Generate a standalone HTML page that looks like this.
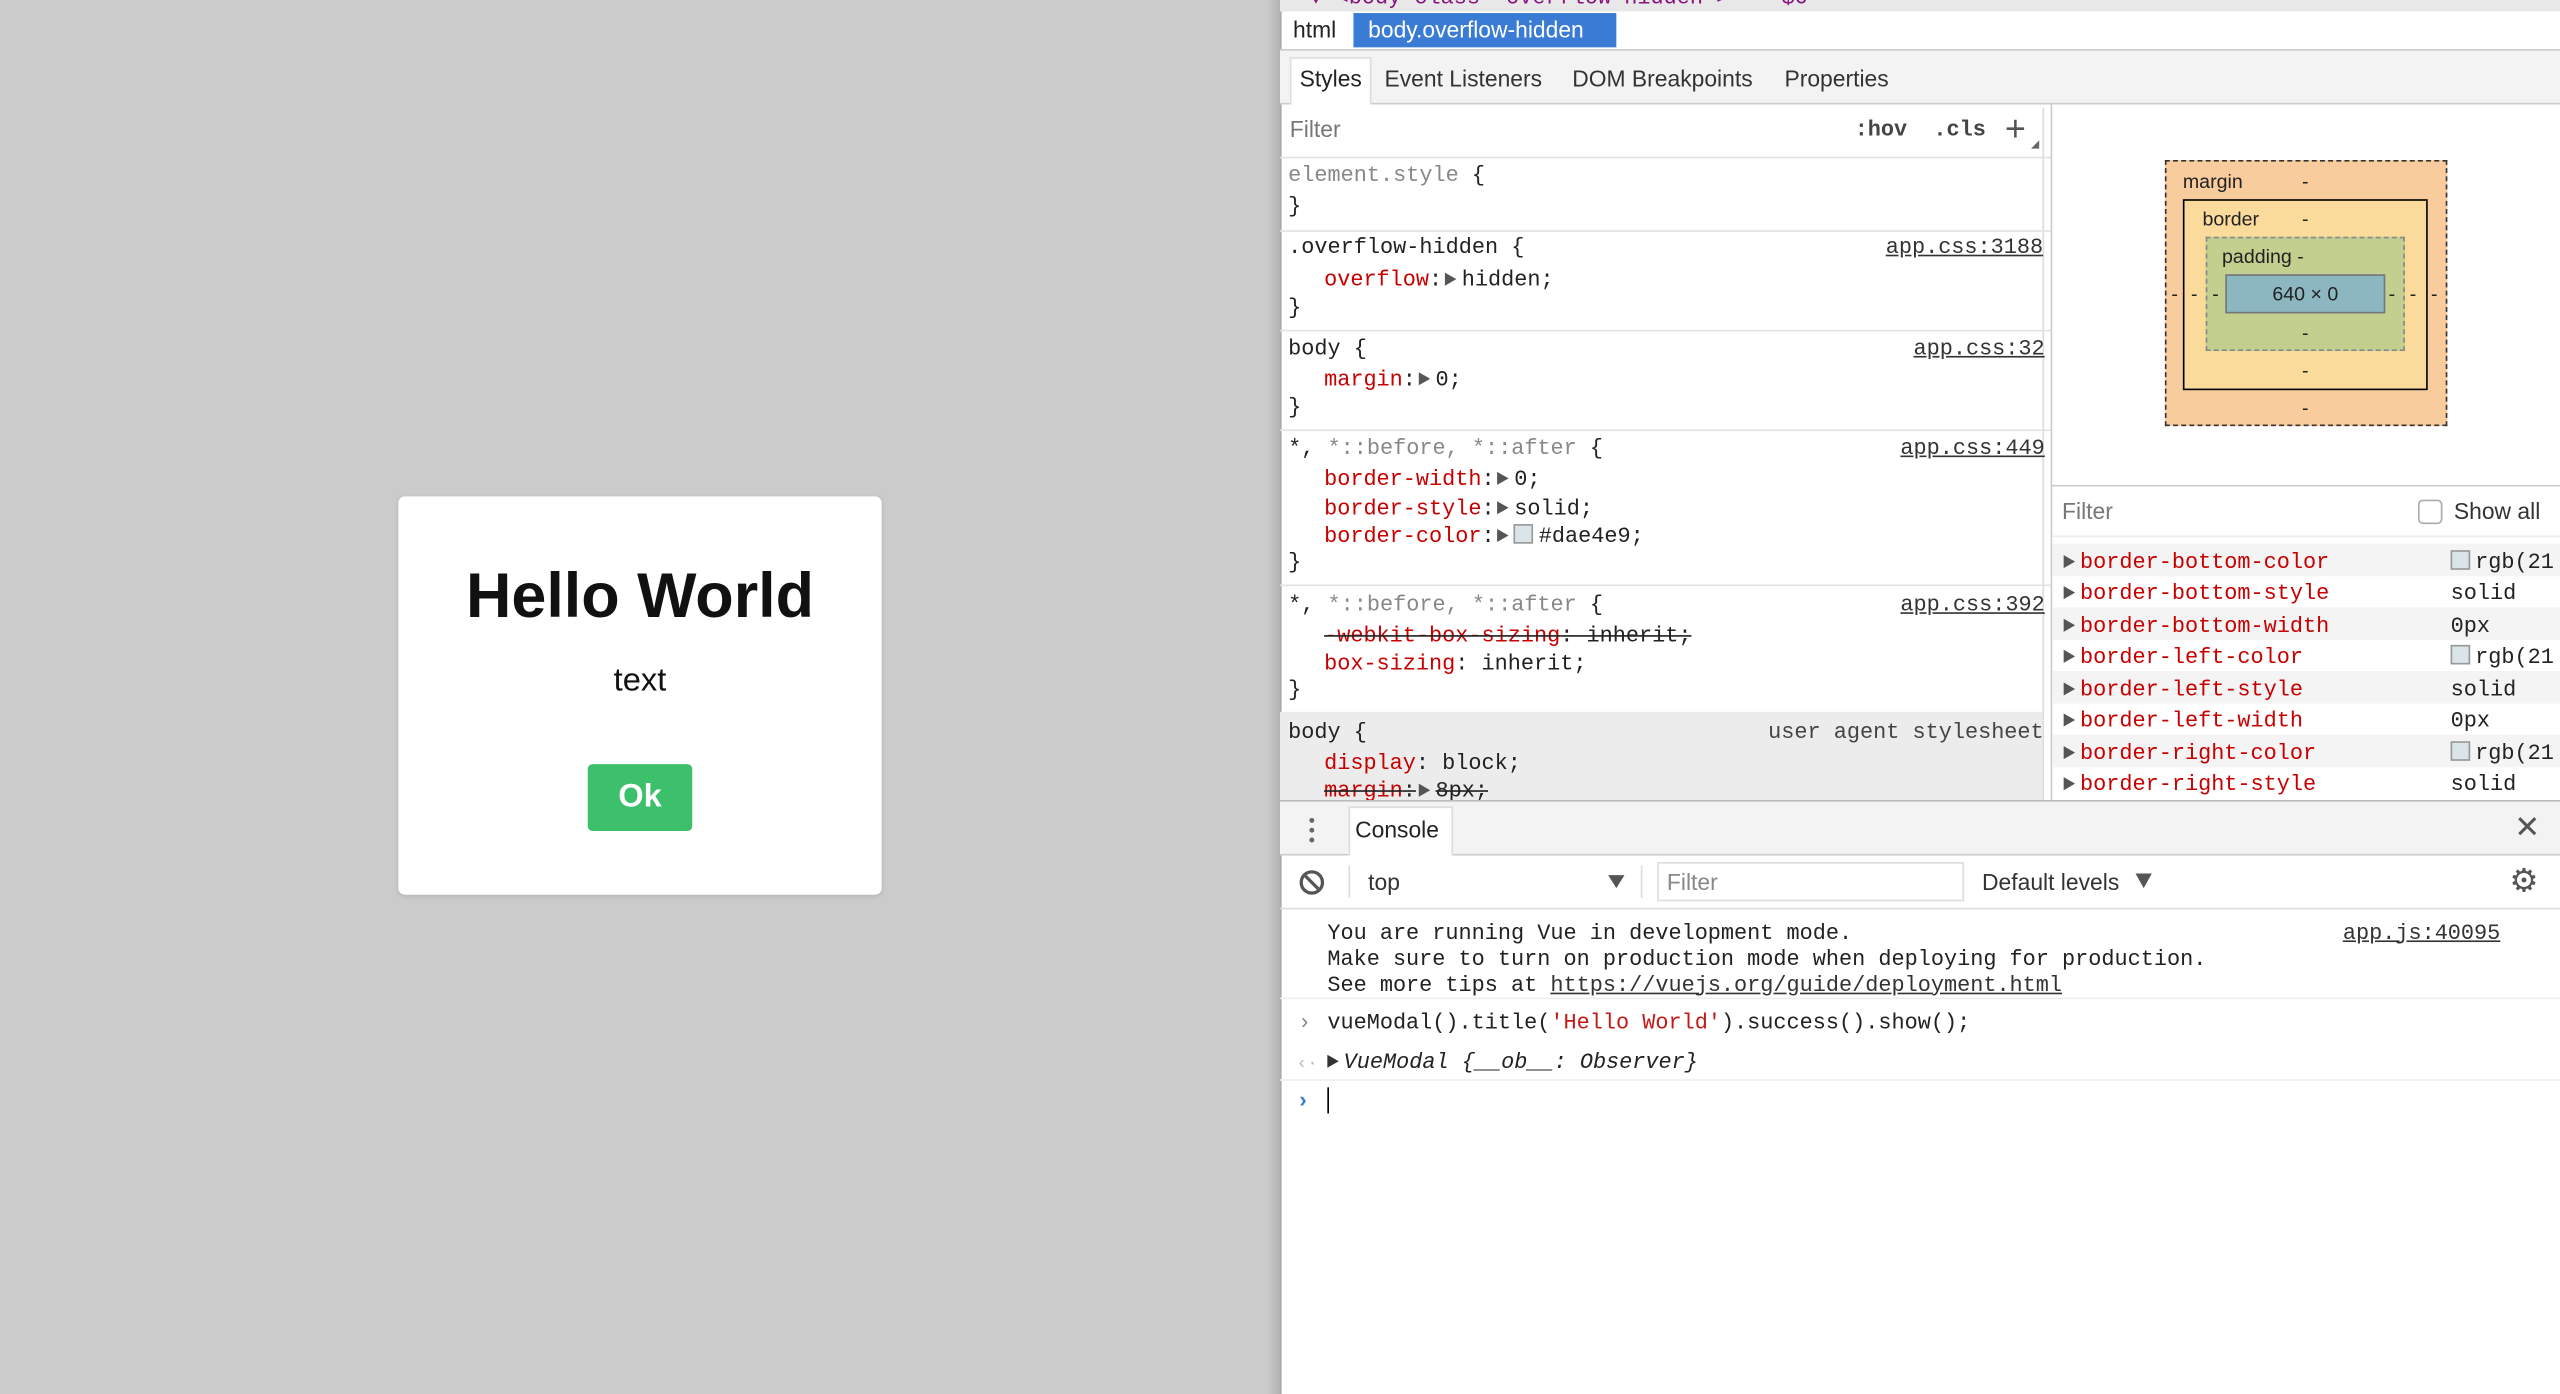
<!DOCTYPE html>
<html><head><meta charset="utf-8"><style>
html,body{margin:0;padding:0;width:2560px;height:1394px;overflow:hidden;background:#cbcbcb}
#w{position:absolute;left:0;top:0;width:1568px;height:854px;transform:scale(1.63265);transform-origin:0 0;font-family:"Liberation Sans",sans-serif;font-size:14px;color:#222}
.a{position:absolute;white-space:pre}
.m{font-family:"Liberation Mono",monospace;font-size:13.4px;line-height:18px;margin-top:2.5px}
.r{color:#c80000}
.g{color:#888}
.u{text-decoration:underline;color:#333}
.s{text-decoration:line-through}
.tri{display:inline-block;width:0;height:0;border-left:7px solid #555;border-top:4.5px solid transparent;border-bottom:4.5px solid transparent;margin:0 3px 0 2px;vertical-align:0}
.sep{position:absolute;left:784px;width:472px;height:1px;background:#e2e2e2}
.sw{display:inline-block;width:10px;height:10px;border:1px solid #999;background:#dae4e9;vertical-align:-1px;margin-right:3px}
</style></head><body><div id="w">
<!-- modal -->
<div class="a" style="left:244px;top:304px;width:296px;height:244px;background:#fff;border-radius:4px;box-shadow:0 1px 3px rgba(0,0,0,.1)"></div>
<div class="a" style="left:244px;width:296px;top:341px;text-align:center;font-size:38.5px;font-weight:bold;color:#111;line-height:50px">Hello World</div>
<div class="a" style="left:244px;width:296px;top:404px;text-align:center;font-size:20px;color:#111;line-height:26px">text</div>
<div class="a" style="left:360px;top:468px;width:64px;height:41px;background:#3cc06b;border-radius:3px;color:#fff;font-size:20px;font-weight:bold;text-align:center;line-height:41px">Ok</div>
<!-- devtools -->
<div class="a" style="left:776px;top:0;width:8px;height:854px;background:linear-gradient(to right,rgba(0,0,0,0),rgba(0,0,0,.12))"></div>
<div class="a" style="left:784px;top:0;width:784px;height:854px;background:#fff;border-left:1px solid #aaa"></div>
<div class="a" style="left:784px;top:0;width:784px;height:7px;background:#e8e8e8;overflow:hidden"><div class="m" style="position:absolute;left:18px;top:-12px;color:#881280">▼ &lt;body class="overflow-hidden"&gt; == $0</div></div>
<div class="a" style="left:792px;top:8px;line-height:21px;font-size:14px">html</div>
<div class="a" style="left:829px;top:8px;width:161px;height:21px;background:#3a7bd5;color:#fff;line-height:21px;font-size:14px;padding-left:9px;box-sizing:border-box">body.overflow-hidden</div>
<div class="a" style="left:784px;top:30px;width:784px;height:34px;background:#f3f3f3;border-top:1px solid #ccc;border-bottom:1px solid #ccc;box-sizing:border-box"></div>
<div class="a" style="left:790px;top:35px;width:50px;height:29px;background:#fff;border:1px solid #ddd;border-bottom:none;box-sizing:border-box"></div>
<div class="a" style="left:796px;top:38px;line-height:20px">Styles</div>
<div class="a" style="left:848px;top:38px;line-height:20px;color:#333">Event Listeners</div>
<div class="a" style="left:963px;top:38px;line-height:20px;color:#333">DOM Breakpoints</div>
<div class="a" style="left:1093px;top:38px;line-height:20px;color:#333">Properties</div>
<!-- styles filter -->
<div class="a" style="left:790px;top:70px;line-height:18px;color:#777">Filter</div>
<div class="a m" style="left:1136px;top:69px;font-weight:bold;color:#444">:hov  .cls</div>
<div class="a" style="left:1228px;top:67px;font-size:22px;line-height:24px;color:#555">+</div>
<div class="a" style="left:1244px;top:86px;width:0;height:0;border-left:5px solid transparent;border-bottom:5px solid #666"></div>
<div class="sep" style="top:96px"></div>
<div class="a" style="left:1256px;top:64px;width:1px;height:427px;background:#ccc"></div>
<div class="a" style="left:1251px;top:66px;width:1px;height:424px;background:#ddd"></div>
<!-- rules -->
<div class="a m g" style="left:789px;top:97px">element.style <span style="color:#222">{</span></div>
<div class="a m" style="left:789px;top:116px">}</div>
<div class="sep" style="top:141px"></div>
<div class="a m" style="left:789px;top:141px">.overflow-hidden {</div>
<div class="a m u" style="left:1155px;top:141px">app.css:3188</div>
<div class="a m" style="left:811px;top:161px"><span class="r">overflow</span>:<span class="tri"></span>hidden;</div>
<div class="a m" style="left:789px;top:178px">}</div>
<div class="sep" style="top:202px"></div>
<div class="a m" style="left:789px;top:203px">body {</div>
<div class="a m u" style="left:1172px;top:203px">app.css:32</div>
<div class="a m" style="left:811px;top:222px"><span class="r">margin</span>:<span class="tri"></span>0;</div>
<div class="a m" style="left:789px;top:239px">}</div>
<div class="sep" style="top:263px"></div>
<div class="a m" style="left:789px;top:264px">*, <span class="g">*::before, *::after</span> {</div>
<div class="a m u" style="left:1164px;top:264px">app.css:449</div>
<div class="a m" style="left:811px;top:283px"><span class="r">border-width</span>:<span class="tri"></span>0;</div>
<div class="a m" style="left:811px;top:301px"><span class="r">border-style</span>:<span class="tri"></span>solid;</div>
<div class="a m" style="left:811px;top:318px"><span class="r">border-color</span>:<span class="tri"></span><span class="sw"></span>#dae4e9;</div>
<div class="a m" style="left:789px;top:334px">}</div>
<div class="sep" style="top:358px"></div>
<div class="a m" style="left:789px;top:360px">*, <span class="g">*::before, *::after</span> {</div>
<div class="a m u" style="left:1164px;top:360px">app.css:392</div>
<div class="a m s" style="left:811px;top:379px"><span class="r">-webkit-box-sizing</span>: inherit;</div>
<div class="a m" style="left:811px;top:396px"><span class="r">box-sizing</span>: inherit;</div>
<div class="a m" style="left:789px;top:412px">}</div>
<div class="a" style="left:784px;top:436px;width:467px;height:54px;background:#ececec"></div>
<div class="a m" style="left:789px;top:438px">body {</div>
<div class="a m" style="left:1083px;top:438px;color:#444">user agent stylesheet</div>
<div class="a m" style="left:811px;top:457px"><span class="r">display</span>: block;</div>
<div class="a m s" style="left:811px;top:474px"><span class="r">margin</span>:<span class="tri"></span>8px;</div>
<!-- box model -->
<div class="a" style="left:1326px;top:98px;width:173px;height:163px;background:#f8cc9d;border:1px dashed #333;box-sizing:border-box"></div>
<div class="a" style="left:1337px;top:122px;width:150px;height:117px;background:#fbdb9b;border:1px solid #000;box-sizing:border-box"></div>
<div class="a" style="left:1351px;top:145px;width:122px;height:70px;background:#c3cf8e;border:1px dashed #888;box-sizing:border-box"></div>
<div class="a" style="left:1363px;top:168px;width:98px;height:24px;background:#8cb6c0;border:1px solid #777;box-sizing:border-box;text-align:center;line-height:22px;font-size:12px;color:#222">640 × 0</div>
<div class="a" style="left:1337px;top:103px;font-size:12px;line-height:16px;color:#222">margin</div>
<div class="a" style="left:1349px;top:126px;font-size:12px;line-height:16px;color:#222">border</div>
<div class="a" style="left:1361px;top:149px;font-size:12px;line-height:16px;color:#222">padding -</div>
<div class="a" style="left:1410px;top:103px;font-size:12px;line-height:16px">-</div>
<div class="a" style="left:1410px;top:126px;font-size:12px;line-height:16px">-</div>
<div class="a" style="left:1410px;top:196px;font-size:12px;line-height:16px">-</div>
<div class="a" style="left:1410px;top:219px;font-size:12px;line-height:16px">-</div>
<div class="a" style="left:1410px;top:242px;font-size:12px;line-height:16px">-</div>
<div class="a" style="left:1330px;top:172px;font-size:12px;line-height:16px">-</div>
<div class="a" style="left:1342px;top:172px;font-size:12px;line-height:16px">-</div>
<div class="a" style="left:1355px;top:172px;font-size:12px;line-height:16px">-</div>
<div class="a" style="left:1463px;top:172px;font-size:12px;line-height:16px">-</div>
<div class="a" style="left:1476px;top:172px;font-size:12px;line-height:16px">-</div>
<div class="a" style="left:1489px;top:172px;font-size:12px;line-height:16px">-</div>
<div class="a" style="left:1257px;top:297px;width:311px;height:1px;background:#ccc"></div>
<div class="a" style="left:1263px;top:304px;line-height:18px;color:#777">Filter</div>
<div class="a" style="left:1481px;top:306px;width:13px;height:13px;border:1px solid #aaa;border-radius:3px;background:#fff"></div>
<div class="a" style="left:1503px;top:304px;line-height:18px;color:#333">Show all</div>
<div class="a" style="left:1257px;top:328px;width:311px;height:1px;background:#eee"></div>
<div class="a" style="left:1257px;top:333px;width:311px;height:19.5px;background:#f4f4f4"></div>
<div class="a" style="left:1257px;top:372px;width:311px;height:19.5px;background:#f4f4f4"></div>
<div class="a" style="left:1257px;top:411px;width:311px;height:19.5px;background:#f4f4f4"></div>
<div class="a" style="left:1257px;top:450px;width:311px;height:19.5px;background:#f4f4f4"></div>
<div class="a m" style="left:1262px;top:333px;line-height:19.5px"><span class="tri"></span><span class="r">border-bottom-color</span>
<span class="tri"></span><span class="r">border-bottom-style</span>
<span class="tri"></span><span class="r">border-bottom-width</span>
<span class="tri"></span><span class="r">border-left-color</span>
<span class="tri"></span><span class="r">border-left-style</span>
<span class="tri"></span><span class="r">border-left-width</span>
<span class="tri"></span><span class="r">border-right-color</span>
<span class="tri"></span><span class="r">border-right-style</span></div>
<div class="a m" style="left:1501px;top:333px;line-height:19.5px"><span class="sw"></span>rgb(21
solid
0px
<span class="sw"></span>rgb(21
solid
0px
<span class="sw"></span>rgb(21
solid</div>
<!-- console drawer -->
<div class="a" style="left:784px;top:490px;width:784px;height:34px;background:#f3f3f3;border-top:1px solid #bbb;border-bottom:1px solid #ccc;box-sizing:border-box"></div>
<div class="a" style="left:802px;top:501px;width:3px;height:3px;border-radius:2px;background:#666;box-shadow:0 6px 0 #666,0 12px 0 #666"></div>
<div class="a" style="left:826px;top:494px;width:64px;height:30px;background:#fff;border:1px solid #ddd;border-bottom:none;box-sizing:border-box"></div>
<div class="a" style="left:830px;top:498px;line-height:20px;color:#222">Console</div>
<div class="a" style="left:1540px;top:496px;font-size:19px;line-height:24px;color:#555">✕</div>
<div class="a" style="left:796px;top:533px;width:15px;height:15px;border:2px solid #555;border-radius:50%;box-sizing:border-box;overflow:hidden"><div style="position:absolute;left:4.5px;top:-2px;width:2px;height:16px;background:#555;transform:rotate(-45deg)"></div></div>
<div class="a" style="left:826px;top:530px;width:1px;height:20px;background:#ddd"></div>
<div class="a" style="left:838px;top:531px;line-height:18px;color:#333">top</div>
<div class="a" style="left:985px;top:536px;width:0;height:0;border-top:8px solid #555;border-left:5px solid transparent;border-right:5px solid transparent"></div>
<div class="a" style="left:1005px;top:530px;width:1px;height:20px;background:#ddd"></div>
<div class="a" style="left:1015px;top:528px;width:188px;height:24px;border:1px solid #ddd;box-sizing:border-box"></div>
<div class="a" style="left:1021px;top:531px;line-height:18px;color:#888">Filter</div>
<div class="a" style="left:1214px;top:531px;line-height:18px;color:#333">Default levels</div>
<div class="a" style="left:1308px;top:535px;width:0;height:0;border-top:9px solid #555;border-left:5px solid transparent;border-right:5px solid transparent"></div>
<div class="a" style="left:1537px;top:528px;font-size:20px;line-height:24px;color:#555">⚙</div>
<div class="a" style="left:784px;top:556px;width:784px;height:1px;background:#ddd"></div>
<div class="a m" style="left:813px;top:562px;line-height:16px;color:#222">You are running Vue in development mode.
Make sure to turn on production mode when deploying for production.
See more tips at <span class="u">https://vuejs.org/guide/deployment.html</span></div>
<div class="a m u" style="left:1435px;top:562px;line-height:16px">app.js:40095</div>
<div class="a" style="left:784px;top:611px;width:784px;height:1px;background:#eee"></div>
<div class="a m" style="left:795px;top:616px;color:#888">›</div>
<div class="a m" style="left:813px;top:616px">vueModal().title(<span style="color:#c41a16">'Hello World'</span>).success().show();</div>
<div class="a m" style="left:794px;top:640px;color:#bbb;font-size:11px">‹·</div>
<div class="a m" style="left:813px;top:640px;font-style:italic"><span class="tri" style="margin-left:0;border-left-color:#333"></span>VueModal {__ob__: Observer}</div>
<div class="a" style="left:784px;top:661px;width:784px;height:1px;background:#eee"></div>
<div class="a m" style="left:794px;top:664px;color:#3a7bd5;font-weight:bold">›</div>
<div class="a" style="left:813px;top:666px;width:1px;height:16px;background:#000"></div>
</div></body></html>
